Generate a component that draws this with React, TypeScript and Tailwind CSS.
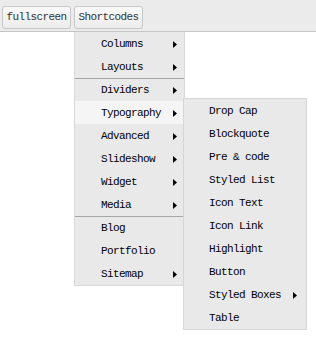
import React from "react";

const font = "font-['Liberation_Mono','DejaVu_Sans_Mono',monospace] text-[11px] tracking-[-0.6px]";

type Item = { label: string; sub?: boolean; sepBefore?: boolean; active?: boolean };

const mainItems: Item[] = [
  { label: "Columns", sub: true },
  { label: "Layouts", sub: true },
  { label: "Dividers", sub: true, sepBefore: true },
  { label: "Typography", sub: true, active: true },
  { label: "Advanced", sub: true },
  { label: "Slideshow", sub: true },
  { label: "Widget", sub: true },
  { label: "Media", sub: true },
  { label: "Blog", sepBefore: true },
  { label: "Portfolio" },
  { label: "Sitemap", sub: true },
];

const typoItems: Item[] = [
  { label: "Drop Cap" },
  { label: "Blockquote" },
  { label: "Pre & code" },
  { label: "Styled List" },
  { label: "Icon Text" },
  { label: "Icon Link" },
  { label: "Highlight" },
  { label: "Button" },
  { label: "Styled Boxes", sub: true },
  { label: "Table" },
];

function Arrow() {
  return (
    <svg width="4" height="7" viewBox="0 0 4 7" className="shrink-0">
      <path d="M0 0 L4 3.5 L0 7 Z" fill="#000" />
    </svg>
  );
}

function Row({ item, children }: { item: Item; children?: React.ReactNode }) {
  return (
    <div
      className={
        "relative flex h-[23px] items-center justify-between pl-[26px] pr-[7px] pt-px text-black " +
        (item.sepBefore ? "border-t border-[#a6a6a6] " : "") +
        (item.active ? "bg-[#f5f5f5]" : "")
      }
    >
      <span>{item.label}</span>
      {item.sub && <Arrow />}
      {children}
    </div>
  );
}

function SubMenu() {
  return (
    <div className="absolute left-[108px] top-[-3px] z-10 w-[124px] border border-[#d6d6d6] bg-[#e9e9e9]">
      {typoItems.map((it) => (
        <div
          key={it.label}
          className="flex h-[23px] items-center justify-between pl-[25px] pr-[9px] pt-px text-black"
        >
          <span>{it.label}</span>
          {it.sub && <Arrow />}
        </div>
      ))}
    </div>
  );
}

export default function App() {
  return (
    <div className={"relative h-[348px] w-[316px] bg-white " + font}>
      <div className="flex h-[32px] gap-[3px] border-b border-[#c6c6c6] bg-[#ebebeb] pl-[2px] pt-[6px]">
        <button className="h-[23px] w-[69px] rounded-[3px] border border-[#c8c8c8] bg-gradient-to-b from-[#fafafa] to-[#ececec] text-[#333]">
          fullscreen
        </button>
        <button className="h-[23px] w-[69px] rounded-[3px] border border-[#c8c8c8] bg-gradient-to-b from-[#fafafa] to-[#ececec] text-[#333]">
          Shortcodes
        </button>
      </div>
      <div className="absolute left-[74px] top-[32px] w-[111px] border-x border-b border-[#d8d8d8] bg-[#e9e9e9]">
        {mainItems.map((it) => (
          <Row key={it.label} item={it}>
            {it.active && <SubMenu />}
          </Row>
        ))}
      </div>
    </div>
  );
}
